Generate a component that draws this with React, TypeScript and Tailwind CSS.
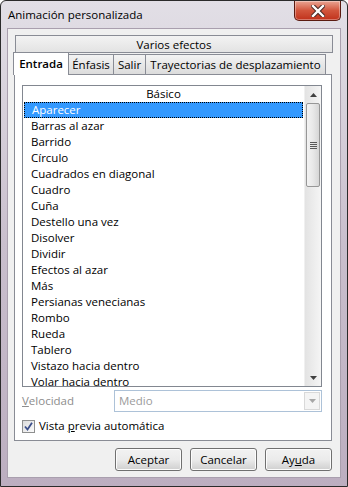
import React from "react";

const items = [
  "Aparecer",
  "Barras al azar",
  "Barrido",
  "Círculo",
  "Cuadrados en diagonal",
  "Cuadro",
  "Cuña",
  "Destello una vez",
  "Disolver",
  "Dividir",
  "Efectos al azar",
  "Más",
  "Persianas venecianas",
  "Rombo",
  "Rueda",
  "Tablero",
  "Vistazo hacia dentro",
  "Volar hacia dentro",
];

const tabs = [
  { name: "Entrada", w: "w-[56px]", active: true },
  { name: "Énfasis", w: "w-[46px]" },
  { name: "Salir", w: "w-[33px]" },
  { name: "Trayectorias de desplazamiento", w: "w-[181px]" },
];

function CloseButton() {
  return (
    <div className="w-[47px] h-[20px] rounded-b-[5px] border border-t-0 border-[#5a1a10] bg-gradient-to-b from-[#e9a493] via-[#d2553c] to-[#c0301a] flex items-center justify-center shadow-[inset_0_0_0_1px_rgba(255,255,255,0.35)]">
      <svg width="14" height="12" viewBox="0 0 14 12">
        <path d="M2 1 L12 11 M12 1 L2 11" stroke="#4a2a26" strokeWidth="4.4" strokeLinecap="square" />
        <path d="M2 1 L12 11 M12 1 L2 11" stroke="#ffffff" strokeWidth="2.4" strokeLinecap="square" />
      </svg>
    </div>
  );
}

function Arrow({ up, color = "#404040" }: { up?: boolean; color?: string }) {
  return (
    <svg width="7" height="4" viewBox="0 0 7 4">
      <path d={up ? "M0 4 L3.5 0 L7 4 Z" : "M0 0 L3.5 4 L7 0 Z"} fill={color} />
    </svg>
  );
}

function Scrollbar() {
  return (
    <div className="w-[17px] h-full flex flex-col bg-gradient-to-r from-[#e3e3e3] to-[#f5f5f5] border-l border-[#f0f0f0]">
      <div className="h-[17px] flex items-center justify-center">
        <Arrow up />
      </div>
      <div className="mx-[1px] h-[84px] rounded-[2px] border border-[#979797] bg-gradient-to-r from-[#f3f3f3] via-[#e8e8e8] to-[#d6d6d6] flex items-center justify-center">
        <div className="flex flex-col gap-[1px]">
          <div className="w-[7px] h-[1px] bg-[#5a5a5a]" />
          <div className="w-[7px] h-[1px] bg-[#5a5a5a]" />
          <div className="w-[7px] h-[1px] bg-[#5a5a5a]" />
          <div className="w-[7px] h-[1px] bg-[#5a5a5a]" />
        </div>
      </div>
      <div className="flex-1" />
      <div className="h-[17px] flex items-center justify-center">
        <Arrow />
      </div>
    </div>
  );
}

function Button({ children }: { children: React.ReactNode }) {
  return (
    <div className="w-[67px] h-[23px] rounded-[3px] border border-[#707070] bg-gradient-to-b from-[#f2f2f2] via-[#ebebeb] to-[#cfcfcf] shadow-[inset_0_0_0_1px_#fcfcfc] flex items-center justify-center text-[11.5px] text-black">
      {children}
    </div>
  );
}

export default function App() {
  return (
    <div
      className="w-[348px] h-[487px] flex flex-col rounded-t-[6px] border border-[#2b2b2b] bg-gradient-to-b from-[#e2dfe6] via-[#c9bfcd] to-[#bcaec0] text-black"
      style={{ fontFamily: '"Open Sans", "Noto Sans", sans-serif' }}
    >
      {/* Title bar */}
      <div className="h-[27px] flex items-start justify-between pl-[7px] pr-[6px]">
        <div className="pt-[6px] text-[11.5px] leading-[16px]">Animación personalizada</div>
        <CloseButton />
      </div>

      {/* Client area */}
      <div className="flex-1 mx-[6px] mb-[8px] border border-[#a99fae] bg-[#f0f0f0] flex flex-col pl-[6px] pr-[8px] pt-[6px]">
        {/* Tab control */}
        <div className="flex flex-col">
          <div className="ml-[1px] mr-[-1px] h-[18px] border border-b-0 border-[#898c95] bg-gradient-to-b from-[#f3f3f3] to-[#e2e2e2] flex items-center justify-center text-[11.5px]">
            Varios efectos
          </div>
          <div className="flex items-end h-[22px] border-t border-[#898c95] -mt-[1px] relative">
            {tabs.map((t) =>
              t.active ? (
                <div
                  key={t.name}
                  className={`${t.w} h-[23px] -ml-[1px] -mt-[2px] border border-b-0 border-[#898c95] bg-white flex items-center justify-center text-[11.5px] font-semibold relative z-10 -mb-[1px]`}
                >
                  {t.name}
                </div>
              ) : (
                <div
                  key={t.name}
                  className={`${t.w} h-[20px] -ml-[1px] border border-b-0 border-[#898c95] bg-gradient-to-b from-[#f3f3f3] to-[#dcdcdc] flex items-center justify-center text-[11.5px]`}
                >
                  {t.name}
                </div>
              )
            )}
          </div>
        </div>

        {/* Tab page */}
        <div className="h-[367px] border border-[#898c95] bg-white flex flex-col pl-[7px] pr-[9px] pt-[10px]">
          {/* List box */}
          <div className="h-[302px] border border-[#828790] flex">
            <div className="flex-1 flex flex-col">
              <div className="h-[16px] flex items-center justify-center text-[11.5px] leading-[16px]">Básico</div>
              <div className="flex flex-col">
                {items.map((it, i) => (
                  <div
                    key={it}
                    className={
                      i === 0
                        ? "h-[16px] mx-[1px] px-[7px] bg-[#3399ff] text-white border border-dotted border-black flex items-center text-[11.5px] leading-[14px]"
                        : "h-[16px] px-[8px] flex items-center text-[11.5px] leading-[16px]"
                    }
                  >
                    {it}
                  </div>
                ))}
              </div>
            </div>
            <Scrollbar />
          </div>

          {/* Velocidad */}
          <div className="mt-[3px] flex items-center h-[22px]">
            <div className="w-[92px] text-[11.5px] text-[#8d8d8d]">
              <span className="underline">V</span>elocidad
            </div>
            <div className="flex-1 h-[22px] border border-[#adc2d8] bg-white flex items-center pl-[4px] pr-[1px]">
              <div className="flex-1 text-[11.5px] text-[#9b9b9b]">Medio</div>
              <div className="w-[16px] h-[18px] border border-[#d9d9d9] bg-[#f4f4f4] flex items-center justify-center">
                <Arrow color="#a6a6a6" />
              </div>
            </div>
          </div>

          {/* Checkbox */}
          <div className="mt-[6px] flex items-center gap-[4px] h-[16px]">
            <div className="w-[13px] h-[13px] border border-[#8e8f8f] bg-gradient-to-br from-[#dcdcdc] to-[#fbfbfb] flex items-center justify-center">
              <svg width="9" height="9" viewBox="0 0 9 9">
                <path d="M1 4.5 L3.5 7.5 L8 0.8" stroke="#3c4f8a" strokeWidth="1.8" fill="none" />
              </svg>
            </div>
            <div className="text-[11.5px]">
              Vista <span className="underline">p</span>revia automática
            </div>
          </div>
        </div>

        {/* Buttons */}
        <div className="flex justify-end gap-[8px] pt-[7px]">
          <Button>Aceptar</Button>
          <Button>Cancelar</Button>
          <Button>
            Ay<span className="underline">u</span>da
          </Button>
        </div>
      </div>
    </div>
  );
}
